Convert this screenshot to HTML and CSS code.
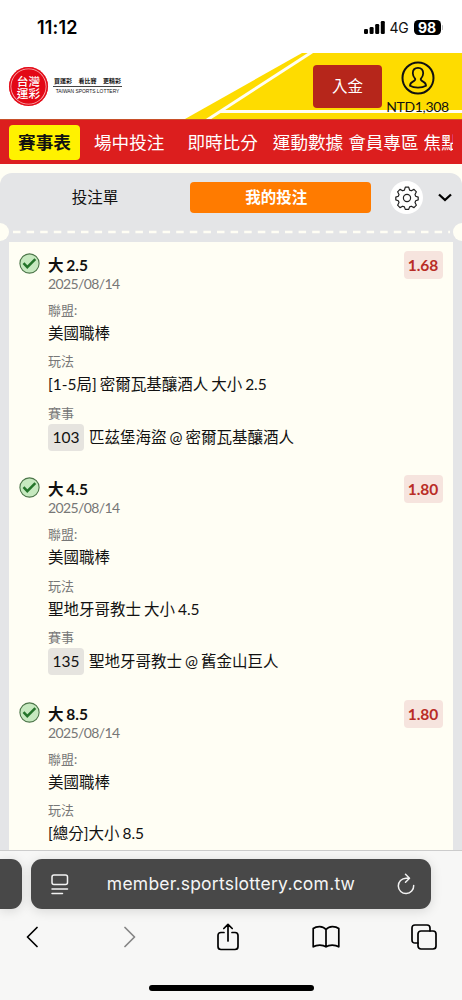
FILE: index.html
```html
<!DOCTYPE html>
<html lang="zh-Hant">
<head>
<meta charset="utf-8">
<meta name="viewport" content="width=device-width, initial-scale=1">
<title>台灣運彩</title>
<link rel="stylesheet" href="styles.css">
</head>
<body>
<div class="phone">
  <div class="status">
    <span class="clock">11:12</span>
    <div class="status-right">
      <svg class="signal" width="21" height="13" viewBox="0 0 21 13"><rect x="0" y="8" width="4" height="5" rx="1.2"/><rect x="5.6" y="6" width="4" height="7" rx="1.2"/><rect x="11.2" y="3" width="4" height="10" rx="1.2"/><rect x="16.8" y="0" width="4" height="13" rx="1.2"/></svg>
      <span class="net">4G</span>
      <span class="battery">98</span><span class="battery-tip"></span>
    </div>
  </div>

  <header class="header">
    <svg class="header-bg" width="462" height="66" viewBox="0 0 462 66">
      <path d="M185 66 302 0H462V66Z" fill="#fedc00"/>
      <path d="M207 67 312 -1" stroke="#fffef4" stroke-width="3"/>
      <path d="M220 58.500H462" stroke="#fffef4" stroke-width="3"/>
    </svg>
    <div class="logo">
      <div class="seal"><span>台灣</span><span>運彩</span></div>
      <div class="slogan"><div class="slogan-zh"><span>買運彩</span><span>看比賽</span><span>更精彩</span></div><div class="slogan-en">TAIWAN SPORTS LOTTERY</div></div>
    </div>
    <div class="account">
      <button class="deposit">入金</button>
      <div class="user">
        <svg width="34" height="34" viewBox="0 0 34 34" fill="none" stroke="#111"><circle cx="17" cy="17" r="15.500" stroke-width="2"/><path d="M17 6.800c-3.500 0-5.200 2.400-5.200 5.400 0 2.500 1.200 4.300 2.400 5.600.5 1.500-.6 2-2.300 2.800-2.200 1-2.900 2.100-2.900 4.200 2.200 1.300 5 1.800 8 1.800s5.800-.5 8-1.800c0-2.100-.7-3.200-2.900-4.200-1.700-.8-2.800-1.300-2.300-2.800 1.200-1.300 2.400-3.100 2.400-5.600 0-3-1.700-5.400-5.200-5.400Z" stroke-width="1.800"/></svg>
        <span>NTD1,308</span>
      </div>
    </div>
  </header>

  <nav class="nav">
    <a class="nav-on">賽事表</a><a class="n2">場中投注</a><a class="n3">即時比分</a><a class="n4">運動數據</a><a class="n5">會員專區</a><a class="n6">焦點</a>
  </nav>

  <main class="panel">
    <div class="tabs">
      <span class="tab">投注單</span>
      <span class="tab tab-on">我的投注</span>
      <span class="gear"><svg width="24" height="24" viewBox="0 0 24 24" fill="none" stroke="#222" stroke-width="1.200" stroke-linejoin="round"><path d="M10.300 1.200h3.400l.9 2.900 1.700.7 2.700-1.400 2.400 2.400-1.400 2.700.7 1.700 2.500.9v2.800l-2.500.9-.7 1.700 1.400 2.700-2.400 2.400-2.700-1.400-1.700.7-.9 2.500h-3.400l-.9-2.500-1.700-.7-2.700 1.400-2.400-2.400 1.400-2.700-.7-1.700-2.500-.9v-2.800l2.500-.9.700-1.700-1.400-2.700 2.400-2.400 2.700 1.400 1.700-.7Z"/><circle cx="12" cy="12" r="3.600"/></svg></span>
      <svg class="chev" width="14" height="9" viewBox="0 0 14 9" fill="none" stroke="#000" stroke-width="2.300"><path d="M1 1.500 7 7l6-5.500"/></svg>
    </div>
    <div class="perf"><i class="notch"></i><svg width="444" height="4" viewBox="0 0 444 4"><path d="M4 2H441" stroke="#fffef4" stroke-width="2.500" stroke-dasharray="7.500 6.100"/></svg><i class="notch"></i></div>

    <div class="ticket">
      <article class="bet">
        <svg class="tick" width="21" height="21" viewBox="0 0 21 21"><circle cx="10.500" cy="10.500" r="9.600" fill="#c6e9bf" stroke="#4b7548" stroke-width="1.100"/><path d="m4.500 10.200 3.800 4 8-8" fill="none" stroke="#24752a" stroke-width="2.500"/></svg>
        <div class="info">
          <h2>大 2.5</h2><p class="date">2025/08/14</p>
          <p class="label">聯盟:</p><p class="value">美國職棒</p>
          <p class="label">玩法</p><p class="value">[1-5局] 密爾瓦基釀酒人 大小 2.5</p>
          <p class="label">賽事</p><p class="match"><b>103</b>匹茲堡海盜 @ 密爾瓦基釀酒人</p>
        </div>
        <span class="odds">1.68</span>
      </article>
      <article class="bet">
        <svg class="tick" width="21" height="21" viewBox="0 0 21 21"><circle cx="10.500" cy="10.500" r="9.600" fill="#c6e9bf" stroke="#4b7548" stroke-width="1.100"/><path d="m4.500 10.200 3.800 4 8-8" fill="none" stroke="#24752a" stroke-width="2.500"/></svg>
        <div class="info">
          <h2>大 4.5</h2><p class="date">2025/08/14</p>
          <p class="label">聯盟:</p><p class="value">美國職棒</p>
          <p class="label">玩法</p><p class="value">聖地牙哥教士 大小 4.5</p>
          <p class="label">賽事</p><p class="match"><b>135</b>聖地牙哥教士 @ 舊金山巨人</p>
        </div>
        <span class="odds">1.80</span>
      </article>
      <article class="bet">
        <svg class="tick" width="21" height="21" viewBox="0 0 21 21"><circle cx="10.500" cy="10.500" r="9.600" fill="#c6e9bf" stroke="#4b7548" stroke-width="1.100"/><path d="m4.500 10.200 3.800 4 8-8" fill="none" stroke="#24752a" stroke-width="2.500"/></svg>
        <div class="info">
          <h2>大 8.5</h2><p class="date">2025/08/14</p>
          <p class="label">聯盟:</p><p class="value">美國職棒</p>
          <p class="label">玩法</p><p class="value">[總分]大小 8.5</p>
        </div>
        <span class="odds">1.80</span>
      </article>
    </div>
  </main>

  <footer class="browser">
    <div class="url-row">
      <div class="prev-tab"></div>
      <div class="url">
        <svg width="18" height="21" viewBox="0 0 18 21" fill="none" stroke="#f2f2f2" stroke-width="1.500" stroke-linecap="round"><rect x="1" y="1" width="15.500" height="9.500" rx="2"/><path d="M1 15h15.500M1 19.500h10.500"/></svg>
        <span>member.sportslottery.com.tw</span>
        <svg width="18" height="22" viewBox="0 0 18 22" fill="none" stroke="#f2f2f2" stroke-width="1.500" stroke-linecap="round" stroke-linejoin="round"><path d="M12 5.200H9A7.700 7.700 0 1 0 16.700 12.500M8.500 1.300l4 3.900-4 4"/></svg>
      </div>
    </div>
    <div class="tools">
      <svg width="12" height="22" viewBox="0 0 12 22" stroke="#000"><path d="M11 1.500 1.500 11 11 20.500"/></svg>
      <svg width="12" height="22" viewBox="0 0 12 22" stroke="#858585"><path d="M1 1.500 10.500 11 1 20.500"/></svg>
      <svg width="22" height="28" viewBox="0 0 22 28" stroke="#000"><path d="M7 9.500H4Q1 9.500 1 12.500v11q0 3 3 3h14q3 0 3-3v-11q0-3-3-3h-3M11 18V1.500M6.800 5.500 11 1.300l4.200 4.200"/></svg>
      <svg width="28" height="24" viewBox="0 0 28 24" stroke="#000"><path d="M14 4.500C11 .5 4.500 1 1.200 3.500v18.300c3.500-2.300 9.800-2.300 12.800 0 3-2.300 9.300-2.300 12.800 0V3.500C23.500 1 17 .5 14 4.500Zm0 0v17.300"/></svg>
      <svg width="26" height="26" viewBox="0 0 26 26" stroke="#000"><path d="M7 19H4q-3 0-3-3V4q0-3 3-3h12q3 0 3 3v3"/><rect x="7" y="7" width="18" height="18" rx="3"/></svg>
    </div>
    <div class="home"></div>
  </footer>
</div>
</body>
</html>
```
FILE: styles.css
```css
* { box-sizing: border-box; margin: 0; padding: 0; }
body { background: #fff; font-family: Lato, "Noto Sans CJK TC", sans-serif; color: #111; }
svg { display: block; flex: none; }
.phone { width: 462px; height: 1000px; display: flex; flex-direction: column; overflow: hidden; background: #fffef4; }

.status { height: 53px; flex: none; background: #fff; display: flex; justify-content: space-between; padding: 17px 19px 0 37px; }
.clock { font: 600 18px/22px Inter, sans-serif; letter-spacing: .2px; color: #000; }
.status-right { display: flex; align-items: center; height: 21px; }
.net { font: 400 14px/20px Inter, sans-serif; letter-spacing: -.3px; margin: 0 5px 0 5px; color: #111; }
.battery { font: 700 14px/15px Inter, sans-serif; width: 27px; height: 15px; background: #000; color: #fff; border-radius: 4.5px; text-align: center; }
.battery-tip { width: 1.5px; height: 5px; background: #bbb; margin-left: 1px; border-radius: 1px; }

.header { height: 66px; flex: none; background: #fff; position: relative; display: flex; justify-content: space-between; }
.header-bg { position: absolute; inset: 0; }
.logo, .account { position: relative; display: flex; }
.logo { padding: 14px 0 0 9px; gap: 5px; }
.seal { width: 39px; height: 39px; border-radius: 50%; background: #e30816; box-shadow: inset 0 0 0 1.5px #e30816, inset 0 0 0 2.3px #f9b5b5; color: #fff; display: flex; flex-direction: column; align-items: center; justify-content: center; font-weight: 500; font-size: 11.7px; line-height: 12px; }
.seal span { height: 12px; }
.slogan { width: 69px; padding-top: 10px; }
.slogan-zh { display: flex; justify-content: space-between; font-size: 6px; line-height: 8px; font-weight: 700; height: 10px; border-bottom: 1px solid #444; padding: 0 1px; }
.slogan-en { font: 500 4.9px/7px "Liberation Sans", sans-serif; text-align: center; white-space: nowrap; padding-top: 1px; }
.account { padding-right: 13px; }
.deposit { width: 69px; height: 43px; margin-top: 12px; border: 0; border-radius: 4px; background: #b6261b; color: #fff; font: 400 15.5px/43px Lato, "Noto Sans CJK TC", sans-serif; }
.user { width: 63px; margin-left: 4px; padding-top: 8px; display: flex; flex-direction: column; align-items: center; }
.user span { font-size: 14px; line-height: 18px; margin-top: 3px; letter-spacing: -.35px; }

.nav { height: 45px; flex: none; background: #dc1e1e; color: #fff; display: flex; align-items: center; padding: 0 9px; overflow: hidden; white-space: nowrap; font-size: 17.6px; line-height: 35px; border-top: 1px solid #c8502a; }
.nav a { flex: none; }
.nav-on { width: 71px; height: 35px; border-radius: 4px; background: #fff200; color: #111; font-weight: 700; text-align: center; }
.n2 { margin-left: 14px; }
.n3 { margin-left: 23px; }
.n4 { margin-left: 15px; }
.n5, .n6 { margin-left: 5px; }
.nav .n6 { width: 29px; overflow: hidden; }

.panel { margin-top: 9px; flex: 1; min-height: 0; background: #e4e5e7; border-radius: 12px 12px 0 0; display: flex; flex-direction: column; }
.tabs { height: 49px; flex: none; display: flex; align-items: center; }
.tab { width: 190px; height: 31px; font-size: 15.5px; line-height: 31px; text-align: center; }
.tab-on { width: 180.5px; padding-right: 8px; background: #ff7b00; color: #fff; font-weight: 700; border-radius: 4px; }
.gear { width: 33px; height: 33px; border-radius: 50%; background: #fff; margin-left: 19.5px; display: flex; align-items: center; justify-content: center; }
.chev { margin-left: 15px; }
.perf { height: 20px; flex: none; display: flex; align-items: center; justify-content: space-between; margin: 0 -9px; }
.notch { width: 18px; height: 18px; border-radius: 50%; background: #fffef4; }
.ticket { flex: 1; min-height: 0; overflow: hidden; background: #fffef4; margin: 0 9px; padding-top: 11px; }
.bet { display: flex; align-items: flex-start; height: 224.4px; padding: 0 10.5px 0 9.5px; }
.info { flex: 1; margin-left: 8.5px; white-space: nowrap; word-spacing: -1px; }
.info h2 { font-size: 15.5px; line-height: 24px; height: 23px; }
.date { font-size: 14px; line-height: 16px; height: 18px; color: #777; letter-spacing: -.6px; }
.label { font-size: 13px; line-height: 19px; height: 20px; margin-top: 7px; color: #777; }
.value { font-size: 15.5px; line-height: 24.3px; height: 24.3px; }
.match { font-size: 15.5px; line-height: 27px; height: 27px; display: flex; }
.match b { font-weight: 400; background: #e6e4df; width: 36px; height: 27px; border-radius: 4px; text-align: center; margin-right: 5px; }
.odds { width: 39px; height: 28px; margin-top: -2px; border-radius: 4px; background: #f6e4de; color: #b92d26; font-weight: 700; font-size: 15.5px; line-height: 28px; text-align: center; }

.browser { height: 150px; flex: none; background: #f7f7f6; border-top: 1px solid #ccc; display: flex; flex-direction: column; }
.url-row { display: flex; gap: 9px; padding-top: 8px; }
.prev-tab { width: 22px; height: 50px; background: #484848; border-radius: 0 11px 11px 0; box-shadow: 0 2px 12px #0002; }
.url { width: 400px; height: 50px; background: #484848; border-radius: 11px; box-shadow: 0 2px 12px #0002; display: flex; align-items: center; justify-content: space-between; padding: 0 16px; padding-left: 20px; color: #f5f5f5; font: 400 17.5px/50px Inter, sans-serif; letter-spacing: .22px; }
.url span { margin-left: -4px; }
.tools { display: grid; grid-template-columns: repeat(5, 1fr); place-items: center; margin: 0 -11px 0 -17px; height: 56px; }
.tools svg { fill: none; stroke-width: 1.7; stroke-linecap: round; stroke-linejoin: round; }
.home { width: 165px; height: 6px; border-radius: 3px; background: #000; margin: 20px auto 0; }
```
